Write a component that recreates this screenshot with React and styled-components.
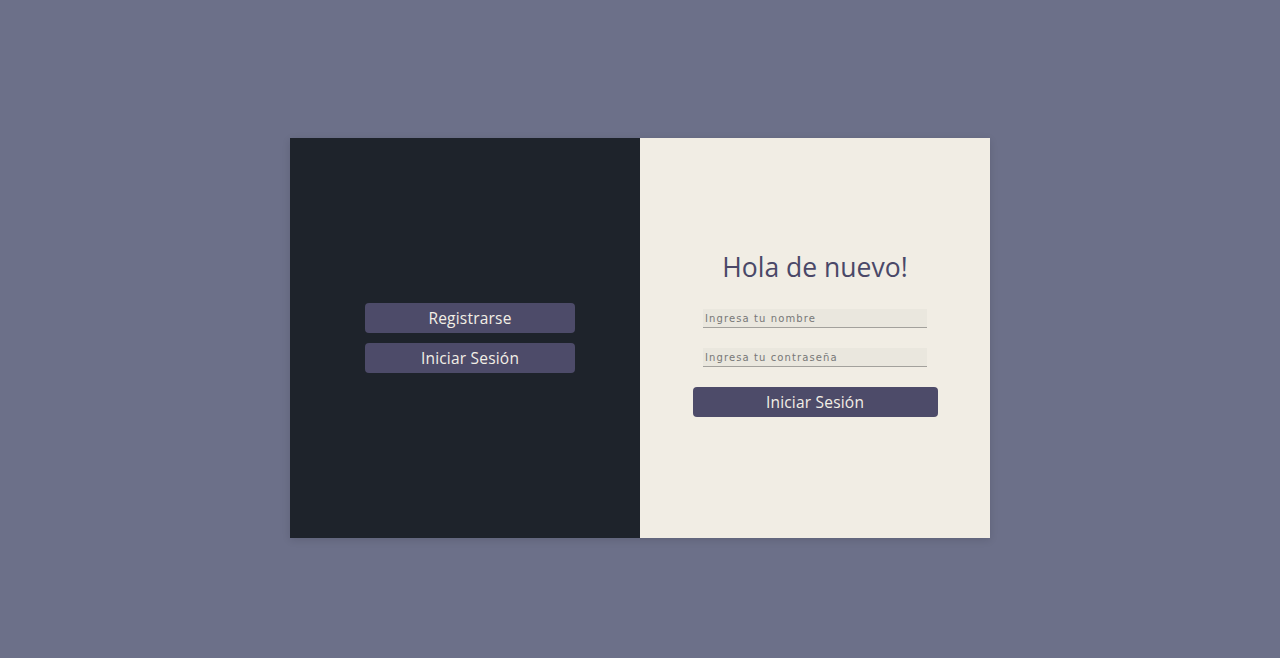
import React from "react";
import styled, { createGlobalStyle } from "styled-components";

const GlobalStyle = createGlobalStyle`
  html, body {
    margin: 0;
    padding: 0;
    background: #6c7089;
  }
  * { box-sizing: border-box; }
`;

const Page = styled.div`
  width: 100%;
  height: 658px;
  display: flex;
  justify-content: center;
  padding-top: 138px;
  font-family: "Open Sans", "Noto Sans", sans-serif;
`;

const Card = styled.div`
  width: 700px;
  height: 400px;
  display: flex;
  box-shadow: 0 2px 8px rgba(0, 0, 0, 0.12);
`;

const Side = styled.div`
  width: 350px;
  display: flex;
  flex-direction: column;
  align-items: center;
  justify-content: center;
  padding-left: ${(p) => (p.dark ? 10 : 0)}px;
  background: ${(p) => (p.dark ? "#1e232b" : "#f1ede4")};
`;

const ButtonStack = styled.div`
  display: flex;
  flex-direction: column;
  gap: 10px;
`;

const Button = styled.button`
  width: ${(p) => p.w}px;
  height: 30px;
  padding: 0;
  border: none;
  border-radius: 4px;
  background: #4d4b69;
  color: #f3efe6;
  font-family: inherit;
  font-size: 15.5px;
  letter-spacing: 0.2px;
  cursor: pointer;
`;

const Form = styled.form`
  display: flex;
  flex-direction: column;
  align-items: center;
  margin-top: -10px;
`;

const Title = styled.h2`
  margin: 0 0 24px;
  font-weight: 400;
  font-size: 26.5px;
  color: #4a4868;
`;

const Input = styled.input`
  width: 224px;
  height: 19px;
  margin-bottom: ${(p) => p.mb}px;
  padding: 0 2px;
  border: none;
  border-bottom: 1px solid #a3a19c;
  background: #eae7de;
  font-family: "DejaVu Sans", sans-serif;
  font-size: 10px;
  letter-spacing: 1.1px;
  color: #555;
  outline: none;
  &::placeholder { color: #777; }
`;

export default function App() {
  return (
    <>
      <GlobalStyle />
      <Page>
        <Card>
          <Side dark>
            <ButtonStack>
              <Button w={210}>Registrarse</Button>
              <Button w={210}>Iniciar Sesión</Button>
            </ButtonStack>
          </Side>
          <Side>
            <Form onSubmit={(e) => e.preventDefault()}>
              <Title>Hola de nuevo!</Title>
              <Input mb={20} placeholder="Ingresa tu nombre" />
              <Input mb={20} type="password" placeholder="Ingresa tu contraseña" />
              <Button w={245}>Iniciar Sesión</Button>
            </Form>
          </Side>
        </Card>
      </Page>
    </>
  );
}
